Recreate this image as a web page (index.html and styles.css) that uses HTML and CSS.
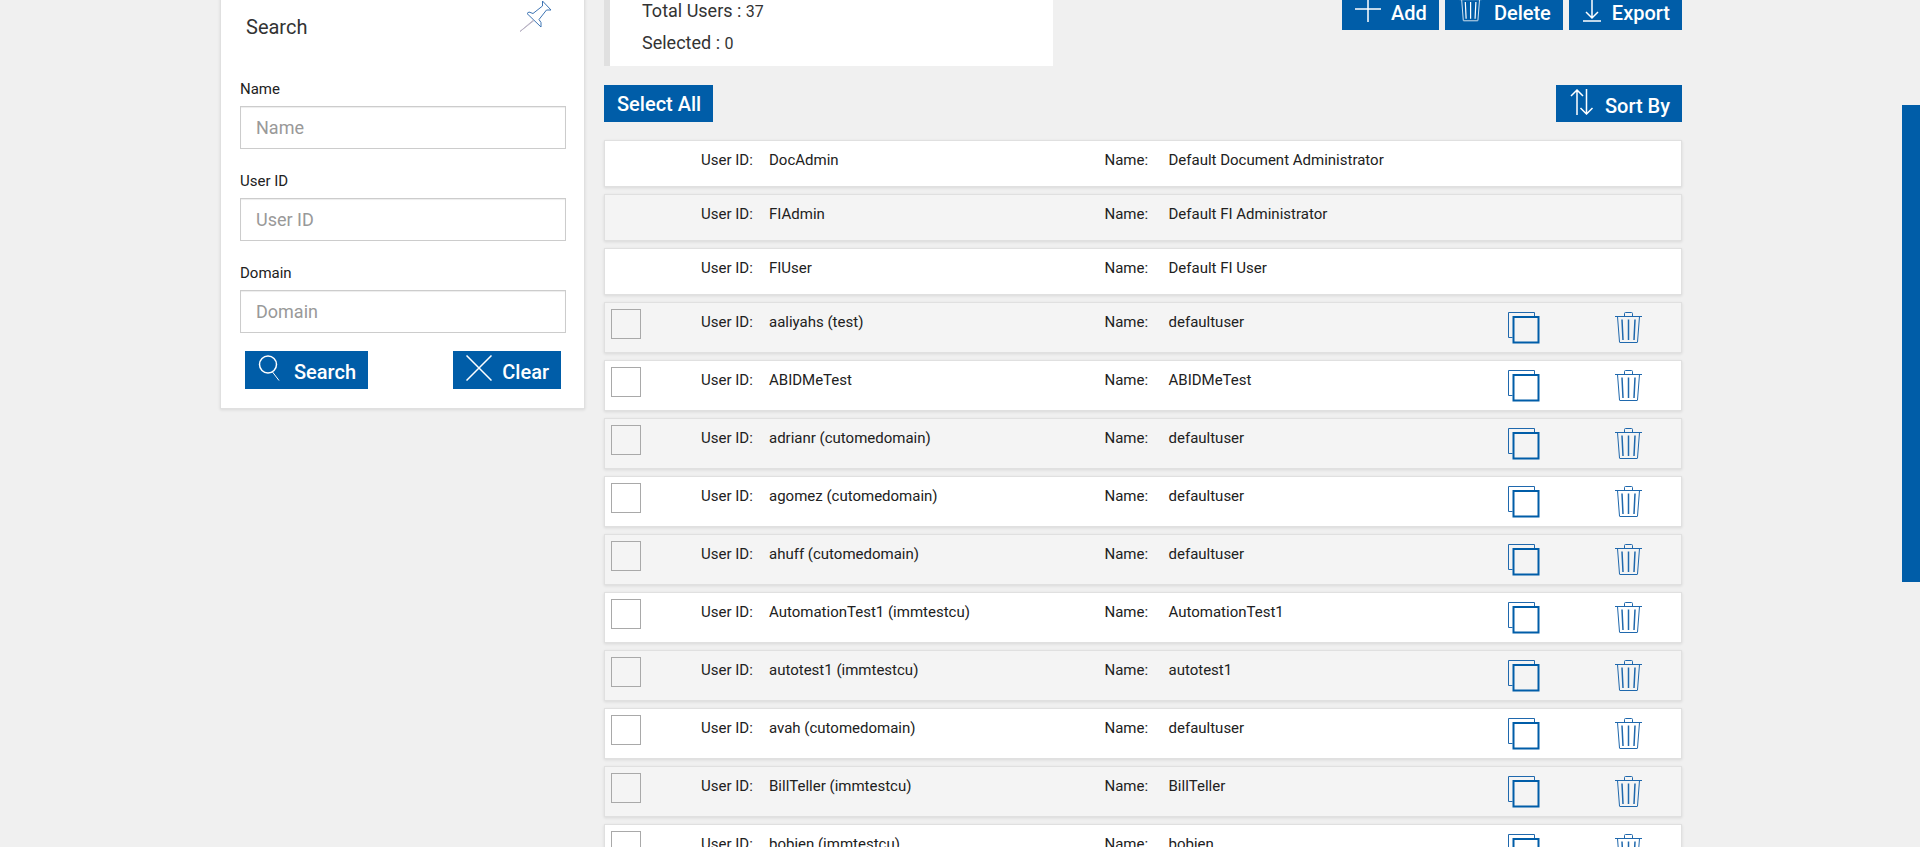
FILE: index.html
```
<!DOCTYPE html>
<html lang="en">
<head>
<meta charset="utf-8">
<title>Users</title>
<link rel="stylesheet" href="styles.css">
</head>
<body>
<svg class="sprite" aria-hidden="true">
  <symbol id="i-trash" viewBox="0 0 28 32"><path d="M9.500 4.500V1.500q0-1 1-1h6q1 0 1 1v3M0 4.500h27M2.500 4.500l2 25.500q0 .5.500.500h17q.500 0 .500-.500l2-25.500"/><path class="bars" d="M7 7.500l1 20.500M13.500 7.500v20.500M20 7.500l-1 20.500"/></symbol>
  <symbol id="i-copy" viewBox="0 0 32 32"><path d="M4.500 25.500h-4v-25h26v4"/><path class="front" d="M5.500 5h25v25.500h-25z"/></symbol>
</svg>
<div class="page">
  <aside class="panel">
    <header class="panel-head">
      <h2>Search</h2>
      <button class="pin" type="button" aria-label="Pin"><svg viewBox="0 0 32 32" width="32" height="32"><path d="M22.500 1v5L13 13.500l-4-1.500-2 1.500L21 27v-4.500l-2-3 7.500-9.500h4.500z"/><path class="needle" d="M13.500 20L0 31.500 14 20.500"/></svg></button>
    </header>
    <form class="fields">
      <label for="name">Name</label><input id="name" type="text" placeholder="Name">
      <label for="uid">User ID</label><input id="uid" type="text" placeholder="User ID">
      <label for="domain">Domain</label><input id="domain" type="text" placeholder="Domain">
      <div class="form-actions">
        <button class="btn" type="button"><svg viewBox="0 0 26 26" width="26" height="26"><circle cx="10" cy="9.500" r="8.500"/><path class="thin" d="M14.500 17l6.500 8.500"/></svg>Search</button>
        <button class="btn" type="button"><svg viewBox="0 0 26 26" width="26" height="26"><path d="M.5.500l25 25M25.500.500l-25 25"/></svg>Clear</button>
      </div>
    </form>
  </aside>
  <main>
    <div class="top">
      <section class="stats">
        <p>Total Users : <span>37</span></p>
        <p>Selected : <span>0</span></p>
      </section>
      <div class="toolbar">
        <button class="btn" type="button"><svg viewBox="0 0 26 26" width="26" height="26"><path d="M13 0v26M0 13h26"/></svg>Add</button>
        <button class="btn" type="button"><svg class="trash" width="26" height="26"><use href="#i-trash"/></svg>Delete</button>
        <button class="btn export" type="button"><svg viewBox="0 0 20 26" width="20" height="26"><path d="M10 0v22M4 16l6 6 6-6M1 25h18"/></svg>Export</button>
      </div>
    </div>
    <div class="list-actions">
      <button class="btn plain" type="button">Select All</button>
      <button class="btn sort" type="button"><svg viewBox="0 0 26 26" width="26" height="26"><path d="M8 26V1M2 7l6-6 6 6M17.500 0v25M11.500 19l6 6 6-6"/></svg>Sort By</button>
    </div>
    <ul class="rows" id="rows"></ul>
  </main>
</div>
<div class="rail"></div>
<script src="users.js"></script>
</body>
</html>
```
FILE: styles.css
```
* { box-sizing: border-box; }
html, body { height: 100%; }
body {
  margin: 0;
  overflow: hidden;
  background: #f0f0f0;
  color: #212121;
  font: 15px/20px Roboto, "Liberation Sans", sans-serif;
}
h2, p, ul { margin: 0; padding: 0; }
svg { fill: none; stroke: currentColor; }
.sprite { position: absolute; width: 0; height: 0; }
.page {
  display: grid;
  grid-template-columns: 365px minmax(0, 1fr);
  align-items: start;
  gap: 19px;
  margin-top: -24px;
  padding: 0 238px 0 220px;
}
.panel {
  padding: 23px 18px 19px 19px;
  background: #fff;
  border: 1px solid #e0e0e0;
  box-shadow: 0 1px 3px rgba(0, 0, 0, .1);
}
.panel-head {
  display: flex;
  justify-content: space-between;
  align-items: flex-start;
  padding: 0 14px 0 6px;
}
h2 { padding-top: 15px; font-size: 20px; line-height: 24px; font-weight: 400; color: #333; }
.pin { padding: 0; border: 0; background: none; color: #3d74b3; }
.pin svg { display: block; }
.pin .needle { stroke: #b9b3c4; }
.fields { display: flex; flex-direction: column; padding-top: 40px; }
.fields label { margin-bottom: 7px; }
.fields input {
  width: 100%;
  height: 43px;
  margin-bottom: 22px;
  padding: 0 15px;
  border: 1px solid #ccc;
  box-shadow: inset 0 1px 1px rgba(0, 0, 0, .075);
  font: 18px/24px Roboto, "Liberation Sans", sans-serif;
}
.fields input::placeholder { color: #999; opacity: 1; }
.form-actions { display: flex; justify-content: space-between; margin-top: -4px; padding: 0 5px; }
.btn {
  display: flex;
  align-items: flex-start;
  gap: 10px;
  height: 38px;
  padding: 4px 12px 4px 13px;
  border: 0;
  background: #005da8;
  color: #fff;
  font: 500 20px/34px Roboto, "Liberation Sans", sans-serif;
  white-space: nowrap;
}
.btn svg { stroke-width: 1.5; }
.btn .trash { stroke-width: 1; }
.btn .thin { stroke-width: 1; }
.top { display: flex; justify-content: space-between; align-items: flex-end; height: 90px; }
.stats {
  width: 449px;
  height: 90px;
  padding: 19px 32px 0;
  background: #fff;
  border-left: 6px solid #e0e0e0;
  color: #333;
  font-size: 18px;
  line-height: 31px;
}
.stats span { font-size: 16px; }
.toolbar { display: flex; gap: 6px; margin-bottom: 36px; }
.list-actions { display: flex; justify-content: space-between; padding: 19px 0 18px; }
.list-actions .btn { height: 37px; }
.btn.plain { line-height: 30px; }
.rows { display: flex; flex-direction: column; gap: 7px; list-style: none; }
.row {
  display: grid;
  grid-template-columns: 90px 68px minmax(0, 336fr) 64px minmax(0, 340fr) 107px 60px;
  align-items: start;
  min-height: 47px;
  padding: 6px 6px 0;
  background: #fff;
  border: 1px solid #e0e0e0;
  box-shadow: 0 1px 3px rgba(0, 0, 0, .1);
}
.row:nth-child(even) { background: #f4f4f4; }
.row.editable { min-height: 51px; }
.row span { padding-top: 3px; }
.row input {
  appearance: none;
  width: 30px;
  height: 30px;
  margin: 0;
  border: 1px solid #a9a9a9;
}
.icon { justify-self: start; padding: 3px 0 0; border: 0; background: none; color: #1f68ad; }
.icon svg { display: block; }
.front { stroke: #005da8; stroke-width: 2; }
.bars { stroke-width: 1.5; }
.rail {
  position: fixed;
  top: 105px;
  right: 0;
  width: 18px;
  height: 477px;
  background: #005da8;
}
```
FILE: users.js
```
const users = [
  ["DocAdmin", "Default Document Administrator", false],
  ["FIAdmin", "Default FI Administrator", false],
  ["FIUser", "Default FI User", false],
  ["aaliyahs (test)", "defaultuser", true],
  ["ABIDMeTest", "ABIDMeTest", true],
  ["adrianr (cutomedomain)", "defaultuser", true],
  ["agomez (cutomedomain)", "defaultuser", true],
  ["ahuff (cutomedomain)", "defaultuser", true],
  ["AutomationTest1 (immtestcu)", "AutomationTest1", true],
  ["autotest1 (immtestcu)", "autotest1", true],
  ["avah (cutomedomain)", "defaultuser", true],
  ["BillTeller (immtestcu)", "BillTeller", true],
  ["bobjen (immtestcu)", "bobjen", true]
];
document.getElementById("rows").innerHTML = users.map(([id, name, editable]) => `
  <li class="row${editable ? " editable" : ""}">
    ${editable ? `<input type="checkbox" aria-label="Select ${id}">` : "<span></span>"}
    <span>User ID:</span><span>${id}</span>
    <span>Name:</span><span>${name}</span>
    ${editable ? `<button class="icon" type="button" aria-label="Copy ${id}"><svg width="32" height="32"><use href="#i-copy"/></svg></button>
    <button class="icon" type="button" aria-label="Delete ${id}"><svg width="28" height="32"><use href="#i-trash"/></svg></button>` : ""}
  </li>`).join("");
```
